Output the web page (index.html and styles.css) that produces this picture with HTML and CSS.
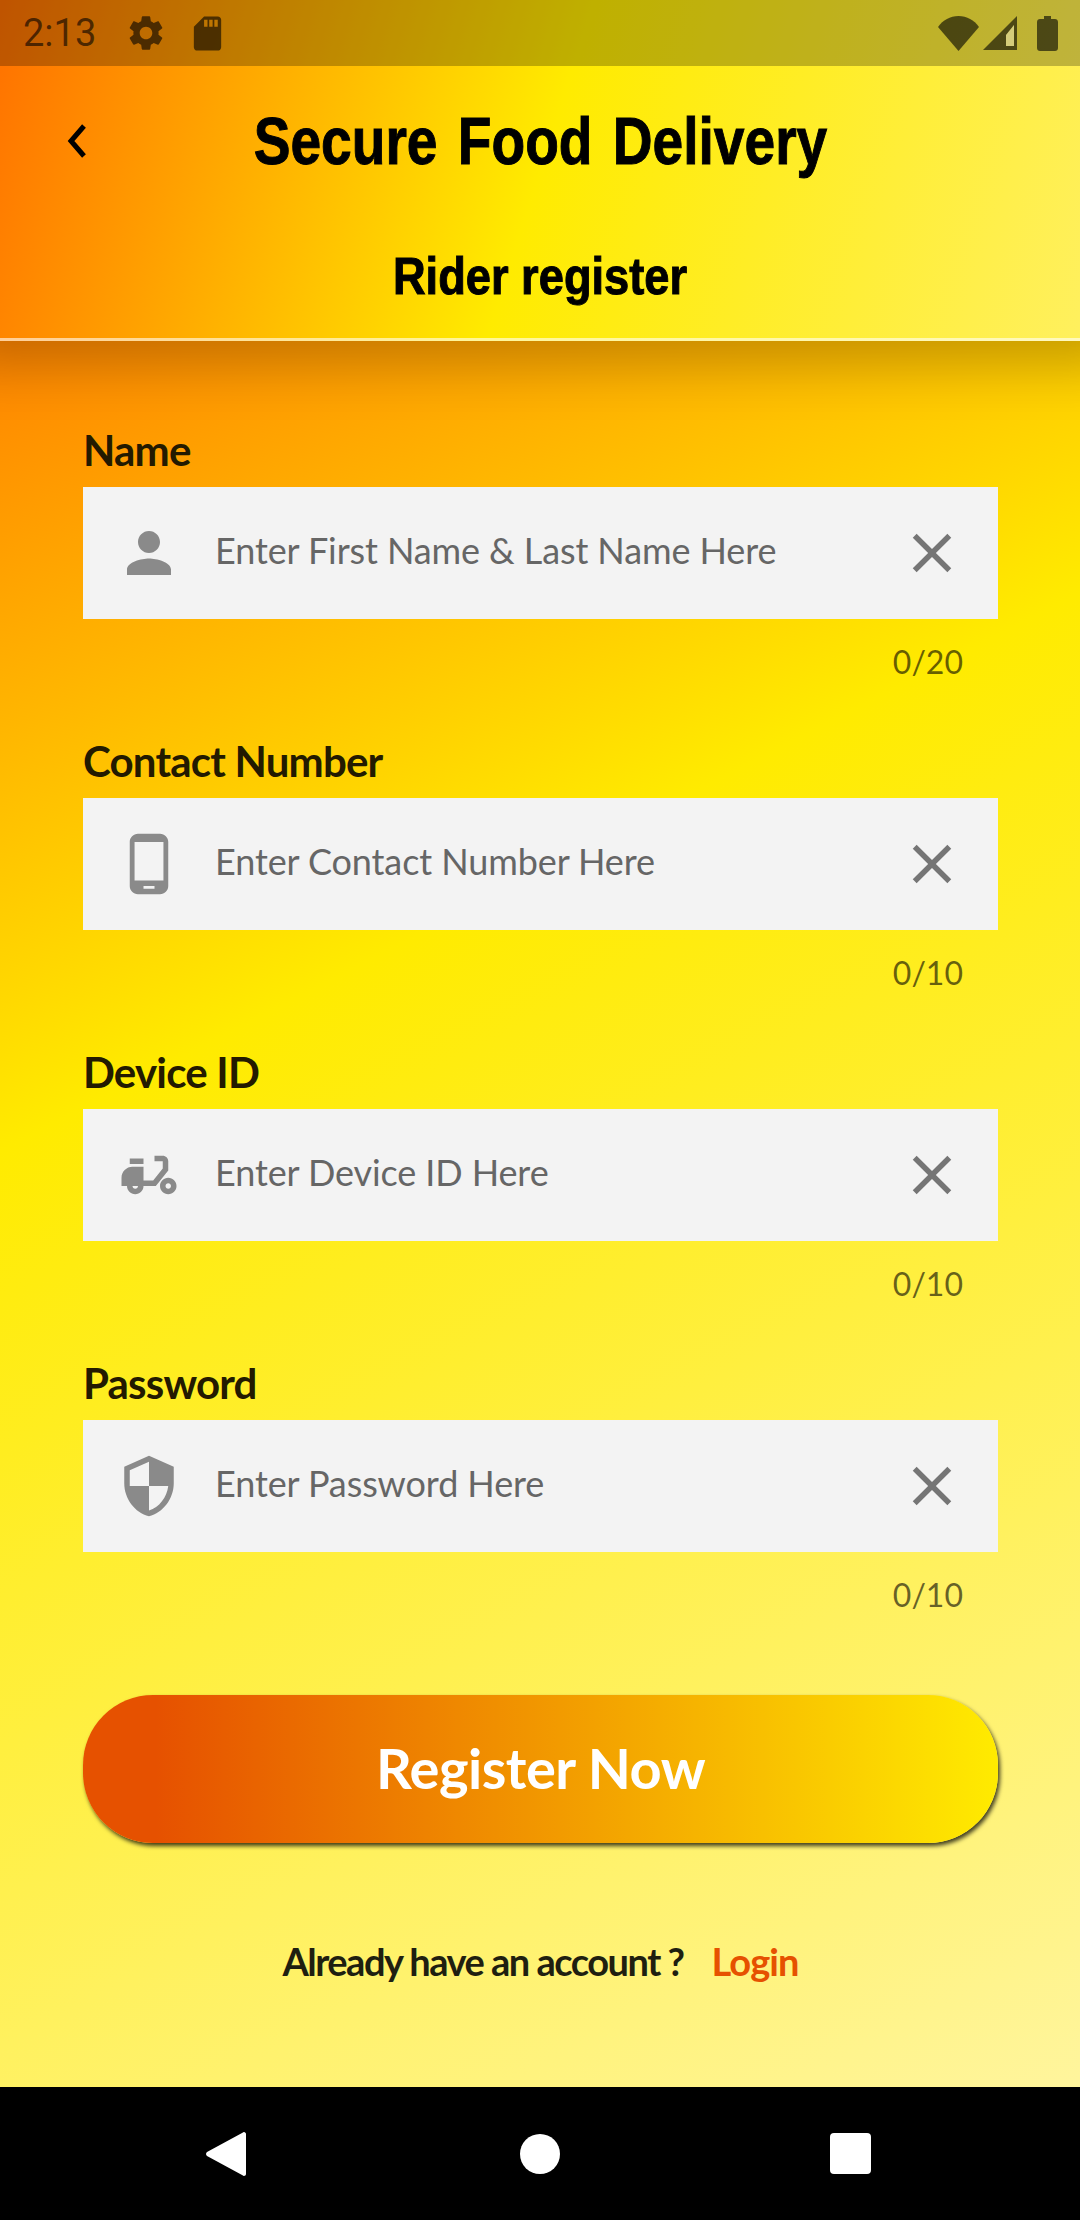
FILE: index.html
```html
<!DOCTYPE html>
<html lang="en">
<head>
    <meta charset="UTF-8">
    <meta name="viewport" content="width=device-width, initial-scale=1.0">
    <title>Rider register</title>
    <link rel="stylesheet" href="styles.css">
</head>
<body>
    <header class="header">
        <div class="status-bar">
            <span class="status-time">2:13</span>
            <svg class="status-gear" viewBox="0 0 24 24"><path d="M19.14 12.94c.04-.3.06-.61.06-.94 0-.32-.02-.64-.07-.94l2.03-1.58c.18-.14.23-.41.12-.61l-1.92-3.32c-.12-.22-.37-.29-.59-.22l-2.39.96c-.5-.38-1.03-.7-1.62-.94l-.36-2.54c-.04-.24-.24-.41-.48-.41h-3.84c-.24 0-.43.17-.47.41l-.36 2.54c-.59.24-1.13.57-1.62.94l-2.39-.96c-.22-.08-.47 0-.59.22L2.74 8.87c-.12.21-.08.47.12.61l2.03 1.58c-.05.3-.09.63-.09.94s.02.64.07.94l-2.03 1.58c-.18.14-.23.41-.12.61l1.92 3.32c.12.22.37.29.59.22l2.39-.96c.5.38 1.03.7 1.62.94l.36 2.54c.05.24.24.41.48.41h3.84c.24 0 .44-.17.47-.41l.36-2.54c.59-.24 1.13-.56 1.62-.94l2.39.96c.22.08.47 0 .59-.22l1.92-3.32c.12-.22.07-.47-.12-.61l-2.01-1.58zM12 15.6c-1.98 0-3.6-1.62-3.6-3.6s1.62-3.6 3.6-3.6 3.6 1.62 3.6 3.6-1.62 3.6-3.6 3.6z"/></svg>
            <svg class="status-sd" viewBox="0 0 24 24"><path d="M18 2h-8L4.02 8 4 20c0 1.1.9 2 2 2h12c1.1 0 2-.9 2-2V4c0-1.1-.9-2-2-2zm-6 6h-2V4h2v4zm3 0h-2V4h2v4zm3 0h-2V4h2v4z"/></svg>
            <span class="status-space"></span>
            <svg class="status-wifi" viewBox="0 0 41 35"><path d="M0 11C5 4 12 0 20.500 0S36 4 41 11L20.500 35z"/></svg>
            <svg class="status-signal" viewBox="0 0 34 34"><path fill-rule="evenodd" d="M0 34L34 0v34zM23 19v11h8V9z"/><path class="signal-hole" d="M23 19v11h8V9z"/></svg>
            <svg class="status-battery" viewBox="0 0 21 35"><path d="M7 0h7v3h4c1.700 0 3 1.300 3 3v26c0 1.700-1.300 3-3 3H3c-1.700 0-3-1.300-3-3V6c0-1.700 1.300-3 3-3h4z"/></svg>
        </div>
        <div class="toolbar">
            <svg class="back-icon" viewBox="0 0 24 34"><path d="M20 2L7 17l13 15" /></svg>
            <h1 class="title">Secure Food Delivery</h1>
        </div>
        <h2 class="subtitle">Rider register</h2>
    </header>

    <main class="form">
        <div class="field">
            <div class="field-label">Name</div>
            <div class="field-box">
                <svg class="field-icon" viewBox="0 0 24 24"><path d="M12 12c2.210 0 4-1.790 4-4s-1.790-4-4-4-4 1.790-4 4 1.790 4 4 4zm0 2c-2.670 0-8 1.340-8 4v2h16v-2c0-2.660-5.330-4-8-4z"/></svg>
                <span class="field-hint">Enter First Name &amp; Last Name Here</span>
                <svg class="clear-icon" viewBox="0 0 24 24"><path d="M19 6.410L17.590 5 12 10.590 6.410 5 5 6.410 10.590 12 5 17.590 6.410 19 12 13.410 17.590 19 19 17.590 13.410 12z"/></svg>
            </div>
            <div class="field-count">0/20</div>
        </div>

        <div class="field">
            <div class="field-label">Contact Number</div>
            <div class="field-box">
                <svg class="field-icon" viewBox="0 0 24 24"><path d="M16 1H8C6.340 1 5 2.340 5 4v16c0 1.660 1.340 3 3 3h8c1.660 0 3-1.340 3-3V4c0-1.660-1.340-3-3-3zm-2 20h-4v-1h4v1zm3.250-3H6.750V4h10.500v14z"/></svg>
                <span class="field-hint">Enter Contact Number Here</span>
                <svg class="clear-icon" viewBox="0 0 24 24"><path d="M19 6.410L17.590 5 12 10.590 6.410 5 5 6.410 10.590 12 5 17.590 6.410 19 12 13.410 17.590 19 19 17.590 13.410 12z"/></svg>
            </div>
            <div class="field-count">0/10</div>
        </div>

        <div class="field">
            <div class="field-label">Device ID</div>
            <div class="field-box">
                <svg class="field-icon" viewBox="0 0 24 24"><path d="M19 7c0-1.100-.9-2-2-2h-3v2h3v2.650L13.520 14H10V9H6c-2.210 0-4 1.790-4 4v3h2c0 1.660 1.340 3 3 3s3-1.340 3-3h4.480L19 10.350V7zM7 17c-.55 0-1-.45-1-1h2c0 .55-.45 1-1 1z"/><path d="M5 6h5v2H5z"/><path d="M19 13c-1.660 0-3 1.340-3 3s1.340 3 3 3 3-1.340 3-3-1.340-3-3-3zm0 4c-.55 0-1-.45-1-1s.45-1 1-1 1 .45 1 1-.45 1-1 1z"/></svg>
                <span class="field-hint">Enter Device ID Here</span>
                <svg class="clear-icon" viewBox="0 0 24 24"><path d="M19 6.410L17.590 5 12 10.590 6.410 5 5 6.410 10.590 12 5 17.590 6.410 19 12 13.410 17.590 19 19 17.590 13.410 12z"/></svg>
            </div>
            <div class="field-count">0/10</div>
        </div>

        <div class="field">
            <div class="field-label">Password</div>
            <div class="field-box">
                <svg class="field-icon" viewBox="0 0 24 24"><path d="M12 1L3 5v6c0 5.550 3.840 10.740 9 12 5.160-1.260 9-6.450 9-12V5l-9-4zm0 10.990h7c-.53 4.120-3.280 7.790-7 8.940V12H5V6.300l7-3.110v8.800z"/></svg>
                <span class="field-hint">Enter Password Here</span>
                <svg class="clear-icon" viewBox="0 0 24 24"><path d="M19 6.410L17.590 5 12 10.590 6.410 5 5 6.410 10.590 12 5 17.590 6.410 19 12 13.410 17.590 19 19 17.590 13.410 12z"/></svg>
            </div>
            <div class="field-count">0/10</div>
        </div>

        <button class="register-btn">Register Now</button>

        <div class="login-row">
            <span>Already have an account ?</span>
            <span class="login-link">Login</span>
        </div>
    </main>

    <nav class="nav-bar">
        <svg class="nav-back" viewBox="0 0 40 46"><path d="M38 1c1 0 2 1 2 2v40c0 1-1 2-2 2-.6 0-1-.3-1.500-.8L1 25c-1.300-1.200-1.300-2.800 0-4L36.500 1.800C37 1.300 37.400 1 38 1z"/></svg>
        <span class="nav-home"></span>
        <span class="nav-recent"></span>
    </nav>
</body>
</html>
```

FILE: styles.css
```css
body {
    margin: 0;
    width: 1080px;
    height: 2220px;
    overflow: hidden;
    display: flex;
    flex-direction: column;
    font-family: Lato, Arial, sans-serif;
}

.header {
    position: relative;
    z-index: 2;
    height: 338px;
    border-bottom: 3px solid rgba(255, 255, 255, 0.6);
    background: linear-gradient(107.5deg, #ff7000 0%, #ffeb00 50%, #fff05e 100%) border-box;
    box-shadow: 0 -15px 50px 40px rgba(0, 0, 0, 0.22);
}

.status-bar {
    height: 66px;
    display: flex;
    align-items: center;
    padding: 0 22px 0 23px;
    background: rgba(0, 0, 0, 0.25);
    fill: rgba(0, 0, 0, 0.6);
}

.status-time {
    font-family: Roboto, sans-serif;
    font-size: 38px;
    color: rgba(0, 0, 0, 0.6);
    width: 72px;
}

.status-gear {
    width: 42px;
    height: 42px;
    margin-left: 30px;
}

.status-sd {
    width: 41px;
    height: 41px;
    margin-left: 20px;
}

.status-space {
    flex: 1;
}

.status-wifi {
    width: 41px;
    height: 35px;
}

.status-signal {
    width: 34px;
    height: 34px;
    margin-left: 4px;
}

.signal-hole {
    fill: rgba(255, 255, 255, 0.35);
}

.status-battery {
    width: 21px;
    height: 35px;
    margin-left: 20px;
}

.toolbar {
    height: 150px;
    display: grid;
    grid-template-columns: 1fr auto 1fr;
    align-items: center;
}

.back-icon {
    width: 24px;
    height: 34px;
    margin-left: 64px;
    fill: none;
    stroke: #000;
    stroke-width: 5;
}

/* no condensed face installed, so the header text is squeezed */
.title {
    grid-column: 2;
    margin: 0;
    font-family: "Liberation Sans", sans-serif;
    font-size: 66px;
    font-weight: 700;
    word-spacing: 6px;
    color: #000;
    transform: scaleX(0.835);
    -webkit-text-stroke: 1px #000;
}

.subtitle {
    margin: 30px 0 0;
    text-align: center;
    font-family: "Liberation Sans", sans-serif;
    font-size: 52px;
    font-weight: 700;
    color: #000;
    transform: scaleX(0.87);
    -webkit-text-stroke: 1px #000;
}

/* gradient runs over the whole screen above the nav bar, the header just covers its top */
.form {
    flex: 1;
    padding: 80px 82px 0 83px;
    background: linear-gradient(152.64deg, #ff5a00 0%, #ffeb00 43.5%, #fff59d 100%) 0 -341px / 1080px 2087px no-repeat;
}

.field {
    padding-bottom: 49.600px;
}

.field-label {
    height: 58px;
    line-height: 58px;
    font-size: 42px;
    font-weight: 700;
    letter-spacing: -0.8px;
    color: #231a00;
}

.field-box {
    height: 132px;
    margin-top: 7.500px;
    display: flex;
    align-items: center;
    padding: 0 33px 0 33px;
    background: #f3f3f3;
}

.field-icon {
    width: 66px;
    height: 66px;
    flex: none;
    fill: #8a8a8a;
}

.field-hint {
    flex: 1;
    margin: 0 0 6px 33px;
    font-size: 36px;
    letter-spacing: -0.1px;
    color: #666;
}

.clear-icon {
    width: 66px;
    height: 66px;
    flex: none;
    fill: #757575;
}

.field-count {
    height: 40px;
    line-height: 40px;
    margin-top: 23px;
    margin-bottom: 1px;
    padding-right: 35px;
    text-align: right;
    font-size: 32px;
    color: rgba(0, 0, 0, 0.6);
}

.register-btn {
    display: block;
    width: 915px;
    height: 148px;
    margin-top: 30px;
    padding: 0 0 3px;
    border: none;
    border-radius: 70px;
    background: linear-gradient(90deg, #e65100 8%, #ffeb00 100%);
    box-shadow: 2px 3px 4px rgba(0, 0, 0, 0.75);
    font-family: Lato, Arial, sans-serif;
    font-size: 56px;
    font-weight: 700;
    letter-spacing: -0.5px;
    color: #fff;
}

.login-row {
    margin-top: 93px;
    display: flex;
    justify-content: center;
    gap: 28px;
    line-height: 50px;
    font-size: 38px;
    font-weight: 700;
    letter-spacing: -1.5px;
    color: #1f1f10;
}

.login-link {
    letter-spacing: -0.9px;
    color: #e65100;
}

.nav-bar {
    height: 133px;
    background: #000;
    position: relative;
    z-index: 3;
    display: grid;
    grid-template-columns: 1fr 1fr 1fr;
    align-items: center;
    justify-items: center;
}

.nav-back {
    width: 40px;
    height: 46px;
    fill: #fff;
    margin-left: 92px;
}

.nav-home {
    width: 40px;
    height: 40px;
    border-radius: 50%;
    background: #fff;
}

.nav-recent {
    width: 41px;
    height: 41px;
    border-radius: 4px;
    background: #fff;
    margin-right: 100px;
}
```
